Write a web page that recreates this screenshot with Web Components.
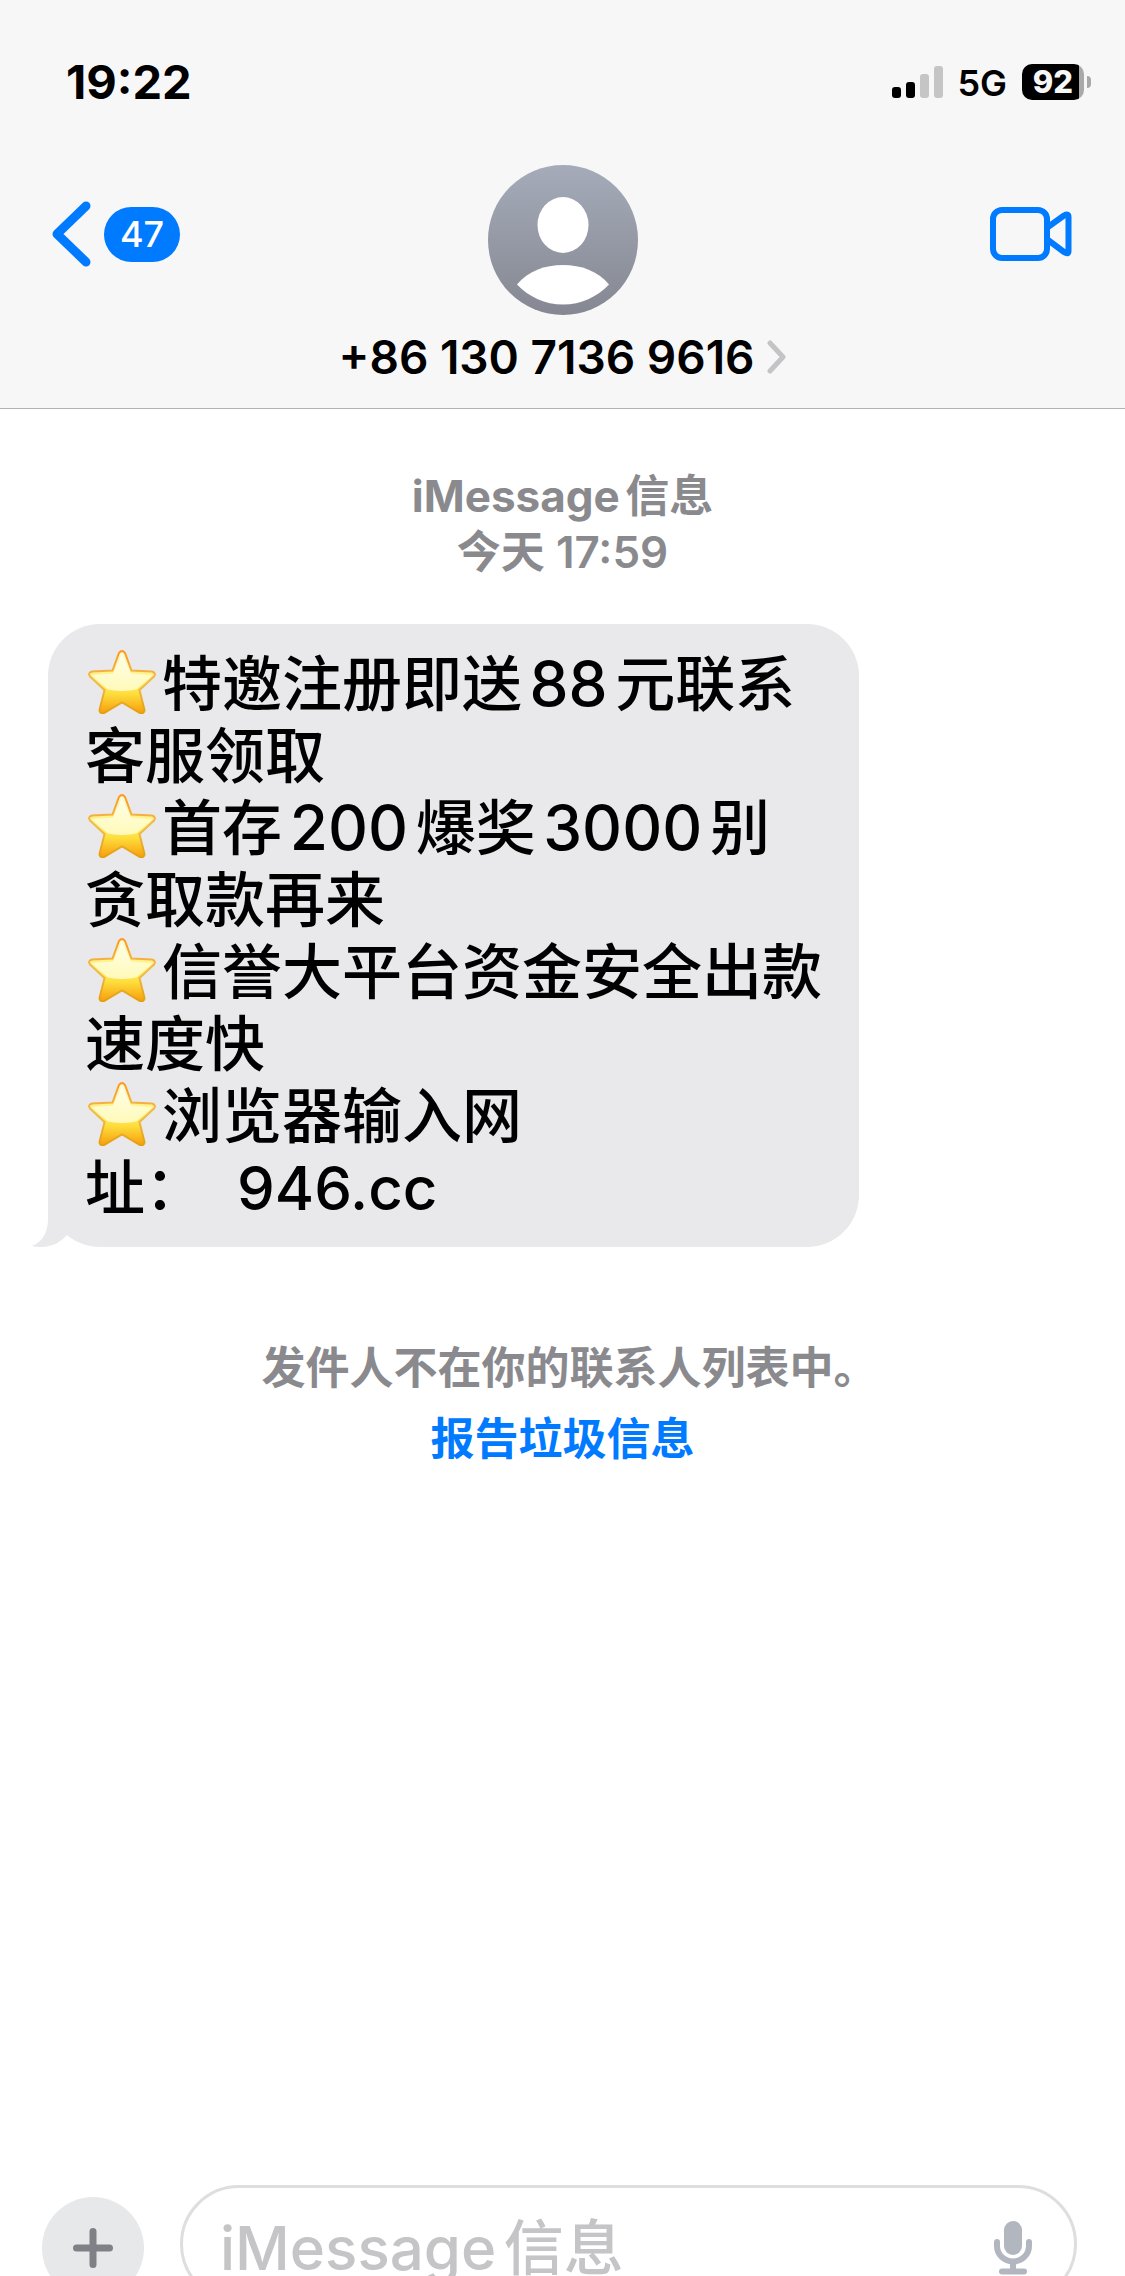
<!DOCTYPE html>
<html lang="zh-CN">
<head>
<meta charset="utf-8">
<meta name="viewport" content="width=device-width, initial-scale=1">
<title>信息</title>
<style>
   html, body {
      height: 100%;
      margin: 0;
   }
   body {
      background: #fff;
      color: #000;
      font-family: Inter, "Noto Sans CJK SC", sans-serif;
      font-weight: 500;
      text-autospace: normal;
      overflow: hidden;
   }
</style>
</head>
<body>
<chat-screen>
   <status-bar slot="top" time="19:22" network="5G" battery="92"></status-bar>
   <chat-nav slot="top" unread="47">+86 130 7136 9616</chat-nav>

   <time-stamp><b>iMessage信息</b><br>今天 17:59</time-stamp>
   <message-bubble><star-icon></star-icon>特邀注册即送<span>88</span>元联系<br>客服领取<br><star-icon></star-icon>首存<span>200</span>爆奖<span>3000</span>别<br>贪取款再来<br><star-icon></star-icon>信誉大平台资金安全出款<br>速度快<br><star-icon></star-icon>浏览器输入网<br>址：&nbsp; 946.cc</message-bubble>
   <sender-notice>
      发件人不在你的联系人列表中。
      <span slot="action">报告垃圾信息</span>
   </sender-notice>

   <message-composer slot="bottom" hint="iMessage信息"></message-composer>
</chat-screen>

<script>
class ChatScreen extends HTMLElement {
   constructor () {
      super();
      this.attachShadow({ mode: 'open' });
      this.shadowRoot.innerHTML = `
      <style>
      :host {
         display: flex;
         flex-direction: column;
         height: 100%;
      }
      header {
         background: #f7f7f7;
         border-bottom: 1px solid #b2b2b2;
      }
      main {
         flex: 1;
         min-height: 0;
         display: flex;
         flex-direction: column;
         padding-top: 59px;
      }
      </style>
      <header><slot name="top"></slot></header>
      <main><slot></slot></main>
      <slot name="bottom"></slot>
      `;
   }
}

class StatusBar extends HTMLElement {
   constructor () {
      super();
      this.attachShadow({ mode: 'open' });
   }

   connectedCallback() {
      this.shadowRoot.innerHTML = `
      <style>
      :host {
         display: flex;
         justify-content: space-between;
         align-items: center;
         height: 44px;
         padding: 60px 34px 0 66px;
         line-height: 44px;
      }
      time {
         font-size: 47px;
         font-weight: 700;
      }
      .right {
         display: flex;
         align-items: center;
      }
      .net {
         font-size: 36px;
         font-weight: 600;
         margin: 2px 15px 0 14px;
      }
      .battery {
         width: 62px;
         height: 36px;
         border-radius: 10px;
         background: linear-gradient(to right, #000 57px, #a9a9a9 57px);
         color: #f7f7f7;
         font-size: 31px;
         font-weight: 800;
         line-height: 36px;
         text-align: center;
      }
      .nub {
         width: 4px;
         height: 12px;
         margin-left: 3px;
         border-radius: 0 4px 4px 0;
         background: #a9a9a9;
      }
      </style>
      <time>${this.getAttribute('time')}</time>
      <div class="right">
         <svg width="51" height="32" viewBox="0 0 51 32" aria-hidden="true">
            <rect x="0" y="21" width="9" height="11" rx="3"/>
            <rect x="14" y="16" width="9" height="16" rx="3"/>
            <rect x="28" y="8" width="9" height="24" rx="3" fill="#c5c5c5"/>
            <rect x="42" y="0" width="9" height="32" rx="3" fill="#c5c5c5"/>
         </svg>
         <span class="net">${this.getAttribute('network')}</span>
         <div class="battery">${this.getAttribute('battery')}</div>
         <div class="nub"></div>
      </div>
      `;
   }
}

class ChatNav extends HTMLElement {
   constructor () {
      super();
      this.attachShadow({ mode: 'open' });
   }

   connectedCallback() {
      this.shadowRoot.innerHTML = `
      <style>
      :host {
         display: grid;
         grid-template-columns: 1fr auto 1fr;
         align-items: start;
         padding: 61px 52px 24px;
      }
      button {
         display: flex;
         align-items: center;
         padding: 0;
         border: 0;
         background: none;
         color: inherit;
         font: inherit;
         cursor: pointer;
      }
      svg {
         display: block;
      }
      .back, .video {
         height: 138px;
      }
      .back {
         gap: 13px;
      }
      .video {
         justify-self: end;
      }
      .badge {
         width: 76px;
         border-radius: 28px;
         background: #007aff;
         color: #fff;
         font-size: 36px;
         line-height: 55px;
         text-align: center;
      }
      .contact {
         flex-direction: column;
         gap: 15px;
      }
      .name {
         display: flex;
         align-items: center;
         gap: 12px;
         font-size: 46px;
         font-weight: 600;
         line-height: 54px;
      }
      </style>
      <button class="back" aria-label="返回">
         <svg width="39" height="66" viewBox="0 0 39 66" fill="none" stroke="#007aff" stroke-width="9" stroke-linecap="round" stroke-linejoin="round">
            <path d="M34 5 L5 33 L34 61"/>
         </svg>
         <span class="badge">${this.getAttribute('unread')}</span>
      </button>
      <button class="contact">
         <svg width="150" height="150" viewBox="0 0 150 150">
            <defs>
               <linearGradient id="sky" x1="0" y1="0" x2="0" y2="1">
                  <stop offset="0" stop-color="#a5abb9"/>
                  <stop offset="1" stop-color="#858892"/>
               </linearGradient>
            </defs>
            <circle cx="75" cy="75" r="75" fill="url(#sky)"/>
            <ellipse cx="75" cy="60" rx="25.5" ry="28" fill="#fff"/>
            <path d="M29 119.500 C40 106 57 100 75 100 S110 106 121 119.500 C109 132 93 139.500 75 139.500 S41 132 29 119.500 Z" fill="#fff"/>
         </svg>
         <span class="name">
            <slot></slot>
            <svg width="20" height="34" viewBox="0 0 20 34" fill="none" stroke="#c4c4c6" stroke-width="5" stroke-linecap="round" stroke-linejoin="round">
               <path d="M3 3 L16 17 L3 31"/>
            </svg>
         </span>
      </button>
      <button class="video" aria-label="视频通话">
         <svg width="83" height="54" viewBox="0 0 83 54" fill="none" stroke="#007aff" stroke-width="6" stroke-linejoin="round">
            <rect x="3" y="3" width="54" height="48" rx="9"/>
            <path d="M58 20 L74 8.500 Q78.500 6 78.500 10 V44 Q78.500 48 74 45 L58 33"/>
         </svg>
      </button>
      `;
   }
}

class TimeStamp extends HTMLElement {
   constructor () {
      super();
      this.attachShadow({ mode: 'open' });
      this.shadowRoot.innerHTML = `
      <style>
      :host {
         display: block;
         color: #8a8a8e;
         font-size: 44px;
         font-weight: 600;
         line-height: 56px;
         text-align: center;
      }
      ::slotted(b) {
         font-weight: 700;
      }
      </style>
      <slot></slot>
      `;
   }
}

class MessageBubble extends HTMLElement {
   constructor () {
      super();
      this.attachShadow({ mode: 'open' });
      this.shadowRoot.innerHTML = `
      <style>
      :host {
         position: relative;
         align-self: flex-start;
         box-sizing: border-box;
         max-width: 80%;
         margin: 44px 48px 0;
         padding: 24px 37px 23px;
         border-radius: 52px;
         background: #e9e9eb;
         font-size: 60px;
         line-height: 72px;
      }
      ::slotted(span) {
         font-size: 62px;
      }
      .tail {
         position: absolute;
         left: -16px;
         bottom: 0;
      }
      </style>
      <svg class="tail" width="50" height="64" viewBox="0 0 50 64" fill="#e9e9eb" aria-hidden="true">
         <path d="M16 0 V36 C16 50 10 59 0 63 Q3 64 10 64 C20 64 29 59 35 52 L50 20 Z"/>
      </svg>
      <slot></slot>
      `;
   }
}

class StarIcon extends HTMLElement {
   constructor () {
      super();
      this.attachShadow({ mode: 'open' });
      this.shadowRoot.innerHTML = `
      <style>
      :host {
         display: inline-block;
         box-sizing: border-box;
         width: 77px;
         height: 64px;
         padding-left: 3px;
         line-height: 0;
         vertical-align: -8px;
      }
      </style>
      <svg width="68" height="64" viewBox="0 0 68 64" role="img" aria-label="星">
         <defs>
            <linearGradient id="body" x1="0" y1="0" x2="0" y2="1">
               <stop offset="0" stop-color="#fff8d0"/>
               <stop offset=".5" stop-color="#fff06a"/>
               <stop offset=".7" stop-color="#fddc3a"/>
               <stop offset="1" stop-color="#f99d0c"/>
            </linearGradient>
            <linearGradient id="edge" x1="0" y1="0" x2="0" y2="1">
               <stop offset="0" stop-color="#f99a22"/>
               <stop offset=".5" stop-color="#f2bc50"/>
               <stop offset="1" stop-color="#e2a010"/>
            </linearGradient>
            <linearGradient id="shine" x1="0" y1="0" x2="0" y2="1">
               <stop offset="0" stop-color="#fffef0"/>
               <stop offset="1" stop-color="#fffab8"/>
            </linearGradient>
            <clipPath id="inside">
               <path d="M34 4 L43 23.500 L65 25 L49 39 L54 61 L34 49 L14 61 L19 39 L3 25 L25 23.500 Z"/>
            </clipPath>
         </defs>
         <path d="M31 3 Q34 -1 37 3 L43.500 20.500 L64 21.500 Q68.500 23 66 26.500 L51.500 40 L56.500 60 Q56.500 64 52 63 L34 52.500 L16 63 Q11.500 64 11.500 60 L16.500 40 L2 26.500 Q-.5 23 4 21.500 L24.500 20.500 Z" fill="url(#body)" stroke="url(#edge)" stroke-width="2"/>
         <path d="M0 0 H68 V32 Q52 41 34 41 T0 32 Z" fill="url(#shine)" clip-path="url(#inside)"/>
      </svg>
      `;
   }
}

class SenderNotice extends HTMLElement {
   constructor () {
      super();
      this.attachShadow({ mode: 'open' });
      this.shadowRoot.innerHTML = `
      <style>
      :host {
         display: flex;
         flex-direction: column;
         align-items: center;
         gap: 15px;
         margin-top: 93px;
         color: #8a8a8e;
         font-size: 44px;
         font-weight: 600;
         line-height: 56px;
      }
      /* makes up for the empty half of the closing full stop */
      div {
         padding-left: 14px;
      }
      a {
         color: #007aff;
         font-weight: 700;
         text-decoration: none;
      }
      </style>
      <div><slot></slot></div>
      <a href="#report"><slot name="action"></slot></a>
      `;
   }
}

class MessageComposer extends HTMLElement {
   constructor () {
      super();
      this.attachShadow({ mode: 'open' });
   }

   connectedCallback() {
      const hint = this.getAttribute('hint');
      // the bar runs on below the fold, only its top part shows
      this.shadowRoot.innerHTML = `
      <style>
      :host {
         flex: none;
         display: flex;
         align-items: flex-start;
         gap: 36px;
         height: 91px;
         padding: 0 48px 0 42px;
         overflow: hidden;
      }
      button {
         flex: none;
         padding: 0;
         border: 0;
         background: none;
         cursor: pointer;
      }
      svg {
         display: block;
      }
      .plus {
         display: grid;
         place-items: center;
         width: 102px;
         height: 102px;
         margin-top: 12px;
         border-radius: 50%;
         background: #e7e8ea;
      }
      .field {
         flex: 1;
         min-width: 0;
         display: flex;
         box-sizing: border-box;
         height: 118px;
         padding: 0 42px 0 37px;
         border: 3px solid #dededf;
         border-radius: 59px;
      }
      input {
         flex: 1;
         min-width: 0;
         height: 72px;
         margin-top: 24px;
         padding: 0;
         border: 0;
         outline: 0;
         background: none;
         font: inherit;
         font-size: 60px;
         text-autospace: inherit;
      }
      input::placeholder {
         color: #c5c5c7;
         opacity: 1;
      }
      .mic {
         align-self: flex-start;
         margin-top: 33px;
      }
      </style>
      <button class="plus" aria-label="添加">
         <svg width="40" height="40" viewBox="0 0 40 40" stroke="#808086" stroke-width="7" stroke-linecap="round">
            <path d="M20 3.500 V36.500 M3.500 20 H36.500"/>
         </svg>
      </button>
      <div class="field">
         <input type="text" placeholder="${hint}" aria-label="${hint}">
         <button class="mic" aria-label="听写">
            <svg width="38" height="54" viewBox="0 0 38 54" fill="none" stroke="#b2b7bf" stroke-width="6" stroke-linecap="round">
               <rect x="10" y="0" width="18" height="34" rx="9" fill="#b2b7bf" stroke="none"/>
               <path d="M3 21 V25 A16 15.500 0 0 0 35 25 V21 M19 41 V50 M8 50.500 H30"/>
            </svg>
         </button>
      </div>
      `;
   }
}

customElements.define('chat-screen', ChatScreen);
customElements.define('status-bar', StatusBar);
customElements.define('chat-nav', ChatNav);
customElements.define('time-stamp', TimeStamp);
customElements.define('message-bubble', MessageBubble);
customElements.define('star-icon', StarIcon);
customElements.define('sender-notice', SenderNotice);
customElements.define('message-composer', MessageComposer);
</script>
</body>
</html>
